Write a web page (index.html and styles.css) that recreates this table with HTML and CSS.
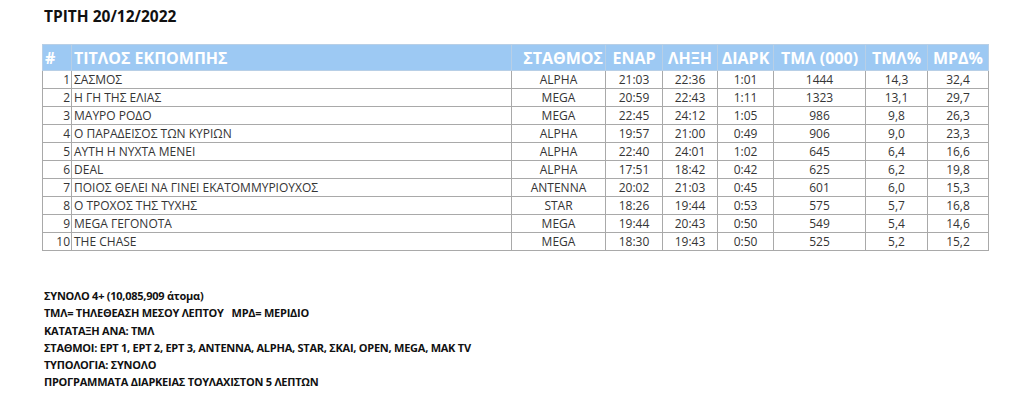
FILE: index.html
```html
<!DOCTYPE html>
<html lang="el">
<head>
<meta charset="utf-8">
<link rel="stylesheet" href="styles.css">
</head>
<body>
<div class="page">
  <h1 class="date">ΤΡΙΤΗ 20/12/2022</h1>
  <table class="ratings">
    <colgroup>
      <col class="c-num"><col class="c-title"><col class="c-station"><col class="c-start"><col class="c-end"><col class="c-dur"><col class="c-tml"><col class="c-tmlp"><col class="c-mrd">
    </colgroup>
    <thead>
      <tr>
        <th class="l">#</th><th class="l">ΤΙΤΛΟΣ ΕΚΠΟΜΠΗΣ</th><th class="r">ΣΤΑΘΜΟΣ</th><th>ΕΝΑΡ</th><th>ΛΗΞΗ</th><th>ΔΙΑΡΚ</th><th>ΤΜΛ (000)</th><th>ΤΜΛ%</th><th>ΜΡΔ%</th>
      </tr>
    </thead>
    <tbody>
      <tr><td class="r">1</td><td class="l">ΣΑΣΜΟΣ</td><td>ALPHA</td><td>21:03</td><td>22:36</td><td>1:01</td><td>1444</td><td>14,3</td><td>32,4</td></tr>
      <tr><td class="r">2</td><td class="l">Η ΓΗ ΤΗΣ ΕΛΙΑΣ</td><td>MEGA</td><td>20:59</td><td>22:43</td><td>1:11</td><td>1323</td><td>13,1</td><td>29,7</td></tr>
      <tr><td class="r">3</td><td class="l">ΜΑΥΡΟ ΡΟΔΟ</td><td>MEGA</td><td>22:45</td><td>24:12</td><td>1:05</td><td>986</td><td>9,8</td><td>26,3</td></tr>
      <tr><td class="r">4</td><td class="l">Ο ΠΑΡΑΔΕΙΣΟΣ ΤΩΝ ΚΥΡΙΩΝ</td><td>ALPHA</td><td>19:57</td><td>21:00</td><td>0:49</td><td>906</td><td>9,0</td><td>23,3</td></tr>
      <tr><td class="r">5</td><td class="l">ΑΥΤΗ Η ΝΥΧΤΑ ΜΕΝΕΙ</td><td>ALPHA</td><td>22:40</td><td>24:01</td><td>1:02</td><td>645</td><td>6,4</td><td>16,6</td></tr>
      <tr><td class="r">6</td><td class="l">DEAL</td><td>ALPHA</td><td>17:51</td><td>18:42</td><td>0:42</td><td>625</td><td>6,2</td><td>19,8</td></tr>
      <tr><td class="r">7</td><td class="l">ΠΟΙΟΣ ΘΕΛΕΙ ΝΑ ΓΙΝΕΙ ΕΚΑΤΟΜΜΥΡΙΟΥΧΟΣ</td><td>ANTENNA</td><td>20:02</td><td>21:03</td><td>0:45</td><td>601</td><td>6,0</td><td>15,3</td></tr>
      <tr><td class="r">8</td><td class="l">Ο ΤΡΟΧΟΣ ΤΗΣ ΤΥΧΗΣ</td><td>STAR</td><td>18:26</td><td>19:44</td><td>0:53</td><td>575</td><td>5,7</td><td>16,8</td></tr>
      <tr><td class="r">9</td><td class="l">MEGA ΓΕΓΟΝΟΤΑ</td><td>MEGA</td><td>19:44</td><td>20:43</td><td>0:50</td><td>549</td><td>5,4</td><td>14,6</td></tr>
      <tr><td class="r">10</td><td class="l">THE CHASE</td><td>MEGA</td><td>18:30</td><td>19:43</td><td>0:50</td><td>525</td><td>5,2</td><td>15,2</td></tr>
    </tbody>
  </table>
  <div class="notes">
    <p>ΣΥΝΟΛΟ 4+ (10,085,909 άτομα)</p>
    <p>ΤΜΛ= ΤΗΛΕΘΕΑΣΗ ΜΕΣΟΥ ΛΕΠΤΟΥ &nbsp;&nbsp;ΜΡΔ= ΜΕΡΙΔΙΟ</p>
    <p>ΚΑΤΑΤΑΞΗ ΑΝΑ: ΤΜΛ</p>
    <p>ΣΤΑΘΜΟΙ: ΕΡΤ 1, ΕΡΤ 2, ΕΡΤ 3, ANTENNA, ALPHA, STAR, ΣΚΑΙ, OPEN, MEGA, MAK TV</p>
    <p>ΤΥΠΟΛΟΓΙΑ: ΣΥΝΟΛΟ</p>
    <p>ΠΡΟΓΡΑΜΜΑΤΑ ΔΙΑΡΚΕΙΑΣ ΤΟΥΛΑΧΙΣΤΟΝ 5 ΛΕΠΤΩΝ</p>
  </div>
</div>
</body>
</html>
```

FILE: styles.css
```css
html, body {
  margin: 0;
  padding: 0;
  background: #ffffff;
}
body {
  font-family: "Open Sans", "Noto Sans", "DejaVu Sans", sans-serif;
  color: #333333;
}
.page {
  padding: 6px 0 0 42px;
  width: 946px;
}
.date {
  margin: 0 0 0 2px;
  font-size: 15.5px;
  line-height: 20px;
  font-weight: 700;
  color: #111111;
}
.ratings {
  margin-top: 18px;
  border-collapse: collapse;
  table-layout: fixed;
  width: 946px;
  font-size: 12px;
}
.c-num { width: 29px; }
.c-title { width: 440px; }
.c-station { width: 94px; }
.c-start { width: 57px; }
.c-end { width: 55px; }
.c-dur { width: 56px; }
.c-tml { width: 92px; }
.c-tmlp { width: 62px; }
.c-mrd { width: 61px; }
.ratings th {
  background: #9dc9f3;
  color: #ffffff;
  font-weight: 700;
  font-size: 16px;
  line-height: 20px;
  height: 25px;
  padding: 0 2px;
  text-align: center;
  border: 1px solid #b8cfe6;
  white-space: nowrap;
  overflow: hidden;
}
.ratings td {
  height: 17px;
  padding: 0 2px;
  line-height: 17px;
  text-align: center;
  border: 1px solid #a9a9a9;
  white-space: nowrap;
  overflow: hidden;
  color: #353535;
}
.ratings th.l, .ratings td.l { text-align: left; }
.ratings th.r { text-align: right; }
.ratings td.r { text-align: right; padding-right: 1px; }
.notes {
  margin-top: 36px;
  margin-left: 2px;
  font-size: 11px;
  letter-spacing: -0.25px;
  font-weight: 700;
  color: #111111;
}
.notes p {
  margin: 0;
  line-height: 17.3px;
}
```
